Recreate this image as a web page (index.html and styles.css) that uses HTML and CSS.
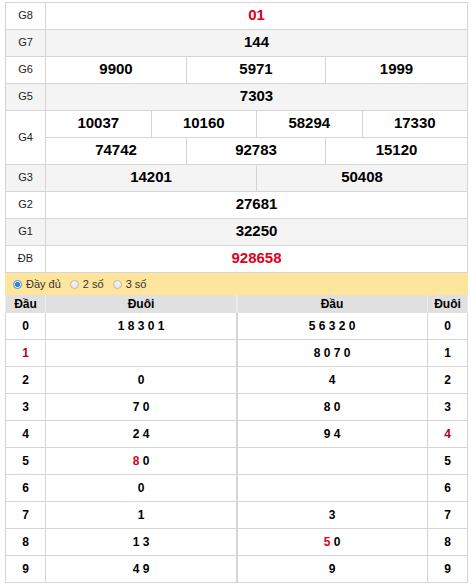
FILE: index.html
```html
<!DOCTYPE html>
<html lang="vi">
<head>
<meta charset="utf-8">
<title>Kết quả xổ số</title>
<link rel="stylesheet" href="styles.css">
</head>
<body>
<div class="wrap">
  <div class="results">
    <div class="row"><div class="lbl">G8</div><div class="vals c1"><div class="cell red">01</div></div></div>
    <div class="row alt"><div class="lbl">G7</div><div class="vals c1"><div class="cell">144</div></div></div>
    <div class="row"><div class="lbl">G6</div><div class="vals c3"><div class="cell">9900</div><div class="cell">5971</div><div class="cell">1999</div></div></div>
    <div class="row alt"><div class="lbl">G5</div><div class="vals c1"><div class="cell">7303</div></div></div>
    <div class="row"><div class="lbl tall">G4</div>
      <div class="stack">
        <div class="vals c4"><div class="cell">10037</div><div class="cell">10160</div><div class="cell">58294</div><div class="cell">17330</div></div>
        <div class="vals c3"><div class="cell">74742</div><div class="cell">92783</div><div class="cell">15120</div></div>
      </div>
    </div>
    <div class="row alt"><div class="lbl">G3</div><div class="vals c2"><div class="cell">14201</div><div class="cell">50408</div></div></div>
    <div class="row"><div class="lbl">G2</div><div class="vals c1"><div class="cell">27681</div></div></div>
    <div class="row alt"><div class="lbl">G1</div><div class="vals c1"><div class="cell">32250</div></div></div>
    <div class="row"><div class="lbl">ĐB</div><div class="vals c1"><div class="cell red">928658</div></div></div>
  </div>

  <div class="options">
    <label class="opt"><span class="radio checked"></span>Đầy đủ</label>
    <label class="opt"><span class="radio"></span>2 số</label>
    <label class="opt"><span class="radio"></span>3 số</label>
  </div>

  <div class="loto-head">
    <div class="h">Đầu</div><div class="h">Đuôi</div><div class="h mid">Đầu</div><div class="h">Đuôi</div>
  </div>
  <div class="loto">
    <div class="k">0</div><div class="d">1 8 3 0 1</div><div class="d mid">5 6 3 2 0</div><div class="k">0</div>
    <div class="k dark">1</div><div class="d"></div><div class="d mid">8 0 7 0</div><div class="k">1</div>
    <div class="k">2</div><div class="d">0</div><div class="d mid">4</div><div class="k">2</div>
    <div class="k">3</div><div class="d">7 0</div><div class="d mid">8 0</div><div class="k">3</div>
    <div class="k">4</div><div class="d">2 4</div><div class="d mid">9 4</div><div class="k dark">4</div>
    <div class="k">5</div><div class="d"><span class="red">8</span>&nbsp;0</div><div class="d mid"></div><div class="k">5</div>
    <div class="k">6</div><div class="d">0</div><div class="d mid"></div><div class="k">6</div>
    <div class="k">7</div><div class="d">1</div><div class="d mid">3</div><div class="k">7</div>
    <div class="k">8</div><div class="d">1 3</div><div class="d mid"><span class="red">5</span>&nbsp;0</div><div class="k">8</div>
    <div class="k">9</div><div class="d">4 9</div><div class="d mid">9</div><div class="k">9</div>
  </div>
</div>
</body>
</html>
```

FILE: styles.css
```css
* { box-sizing: border-box; }
html, body { margin: 0; padding: 0; background: #fff; }
body { font-family: "Liberation Sans", Arial, sans-serif; color: #000; }

.wrap { width: 463px; margin: 2px 0 0 5px; }

.results {
  display: flex;
  flex-direction: column;
  gap: 1px;
  padding: 1px;
  background: #d5d5d5;
}
.row {
  display: grid;
  grid-template-columns: 39px 1fr;
  gap: 1px;
}
.lbl {
  height: 26px;
  padding-bottom: 2px;
  background: #fff;
  font-size: 11px;
  color: #222;
  display: flex;
  align-items: center;
  justify-content: center;
}
.lbl.tall { height: 53px; }
.stack { display: flex; flex-direction: column; gap: 1px; }
.vals { display: grid; gap: 1px; }
.c1 { grid-template-columns: 1fr; }
.c2 { grid-template-columns: 1fr 1fr; }
.c3 { grid-template-columns: 140px 138px 1fr; }
.c4 { grid-template-columns: 1fr 1fr 1fr 1fr; }
.cell {
  height: 26px;
  padding-bottom: 3px;
  background: #fff;
  font-size: 15px;
  font-weight: bold;
  display: flex;
  align-items: center;
  justify-content: center;
}
.alt .lbl, .alt .cell { background: #f4f4f4; }
.red { color: #e0001b; }
.dark { color: #b3001a; }

.options {
  height: 22px;
  background: #fee59c;
  display: flex;
  align-items: center;
  padding-left: 8px;
  gap: 9px;
  font-size: 11px;
  color: #333;
}
.opt { display: flex; align-items: center; gap: 4px; }
.radio {
  width: 9px;
  height: 9px;
  border-radius: 50%;
  border: 1px solid #b9b9b9;
  background: linear-gradient(#f4f4f4, #e6e6e6);
}
.radio.checked {
  border-color: #3a8fe0;
  background: radial-gradient(circle, #2f86e0 0 2.3px, #fff 2.6px);
}

.loto-head {
  display: grid;
  grid-template-columns: 39px 190px 190px 39px;
  gap: 1px;
  height: 18px;
  padding: 0 1px;
  background: #ebebeb;
}
.h {
  background: #e0e0e0;
  font-size: 12px;
  font-weight: bold;
  display: flex;
  align-items: center;
  justify-content: center;
}
.h.mid { box-shadow: inset 1px 0 #ebebeb; }

.loto {
  display: grid;
  grid-template-columns: 39px 190px 190px 39px;
  grid-auto-rows: 26px;
  gap: 1px;
  padding: 0 1px 1px;
  background: #d5d5d5;
}
.k, .d {
  background: #fff;
  font-size: 12px;
  font-weight: bold;
  display: flex;
  align-items: center;
  justify-content: center;
  white-space: pre;
}
.d.mid { box-shadow: inset 1px 0 #d5d5d5; }
```
